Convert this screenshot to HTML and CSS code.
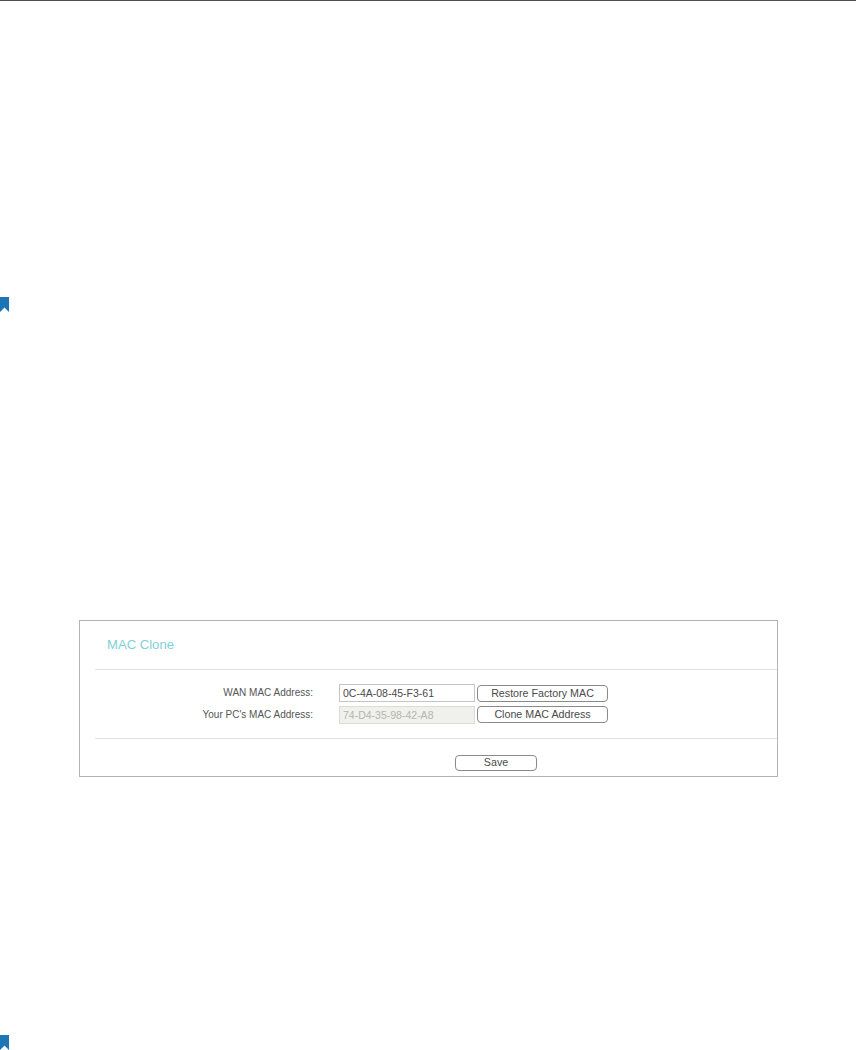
FILE: index.html
```html
<!DOCTYPE html>
<html lang="en">
<head>
<meta charset="utf-8">
<title>MAC Clone</title>
<link rel="stylesheet" href="styles.css">
</head>
<body>
<div class="page">
  <div class="top-rule"></div>
  <svg class="mark mark-one" viewBox="0 0 9 16" width="9" height="16"><path d="M0 0H9V15L4.5 10.5L0 15Z"/></svg>
  <section class="panel">
    <h1 class="title">MAC Clone</h1>
    <div class="fields">
      <div class="row">
        <span class="label">WAN MAC Address:</span>
        <span class="input">0C-4A-08-45-F3-61</span>
        <span class="btn btn-wide btn-first">Restore Factory MAC</span>
      </div>
      <div class="row">
        <span class="label">Your PC's MAC Address:</span>
        <span class="input input-disabled">74-D4-35-98-42-A8</span>
        <span class="btn btn-wide">Clone MAC Address</span>
      </div>
    </div>
    <div class="actions">
      <span class="btn btn-save">Save</span>
    </div>
  </section>
  <svg class="mark mark-two" viewBox="0 0 9 16" width="9" height="16"><path d="M0 0H9V15L4.5 10.5L0 15Z"/></svg>
</div>
</body>
</html>
```

FILE: styles.css
```css
html, body {
  margin: 0;
  padding: 0;
  background: #fff;
}
.page {
  height: 1050px;
  overflow: hidden;
  font-family: "Liberation Sans", Arial, sans-serif;
  font-size: 10px;
  color: #555;
}
.top-rule {
  height: 1px;
  background: #4a4d55;
}
.mark {
  display: block;
  fill: #1c75b4;
}
.mark-one {
  margin-top: 296px;
}
.mark-two {
  margin-top: 258px;
}
.panel {
  box-sizing: border-box;
  width: 699px;
  height: 157px;
  margin: 307px 0 0 79px;
  border: 1px solid #b3b3b3;
  padding-left: 15px;
}
.title {
  box-sizing: border-box;
  height: 49px;
  margin: 0;
  padding: 16px 0 0 12px;
  font-size: 13.1px;
  line-height: 16px;
  font-weight: 400;
  color: #7fd0d4;
  border-bottom: 1px solid #e3e3e3;
}
.fields {
  box-sizing: border-box;
  height: 69px;
  padding-top: 14px;
  border-bottom: 1px solid #e3e3e3;
  display: flex;
  flex-direction: column;
  gap: 4px;
}
.row {
  display: flex;
  align-items: flex-start;
  height: 18px;
}
.label {
  width: 218px;
  line-height: 18px;
  text-align: right;
  margin-right: 26px;
}
.input {
  box-sizing: border-box;
  width: 136px;
  height: 18px;
  margin-right: 2px;
  padding-left: 3px;
  border: 1px solid #c4c4c4;
  line-height: 16px;
  font-size: 10.5px;
  color: #4a4a4a;
}
.input-disabled {
  background: #f0f0ec;
  border-color: #dcdcd6;
  color: #b5b5b0;
}
.btn {
  box-sizing: border-box;
  display: block;
  height: 17px;
  border: 1px solid #8a8a8a;
  border-radius: 4px;
  background: #fff;
  text-align: center;
  line-height: 14px;
  font-size: 10.7px;
  color: #4a4a4a;
}
.btn-wide {
  width: 131px;
}
.btn-first {
  margin-top: 1px;
}
.actions {
  padding: 16px 0 0 360px;
}
.btn-save {
  width: 82px;
  height: 16px;
  line-height: 12px;
}
```
